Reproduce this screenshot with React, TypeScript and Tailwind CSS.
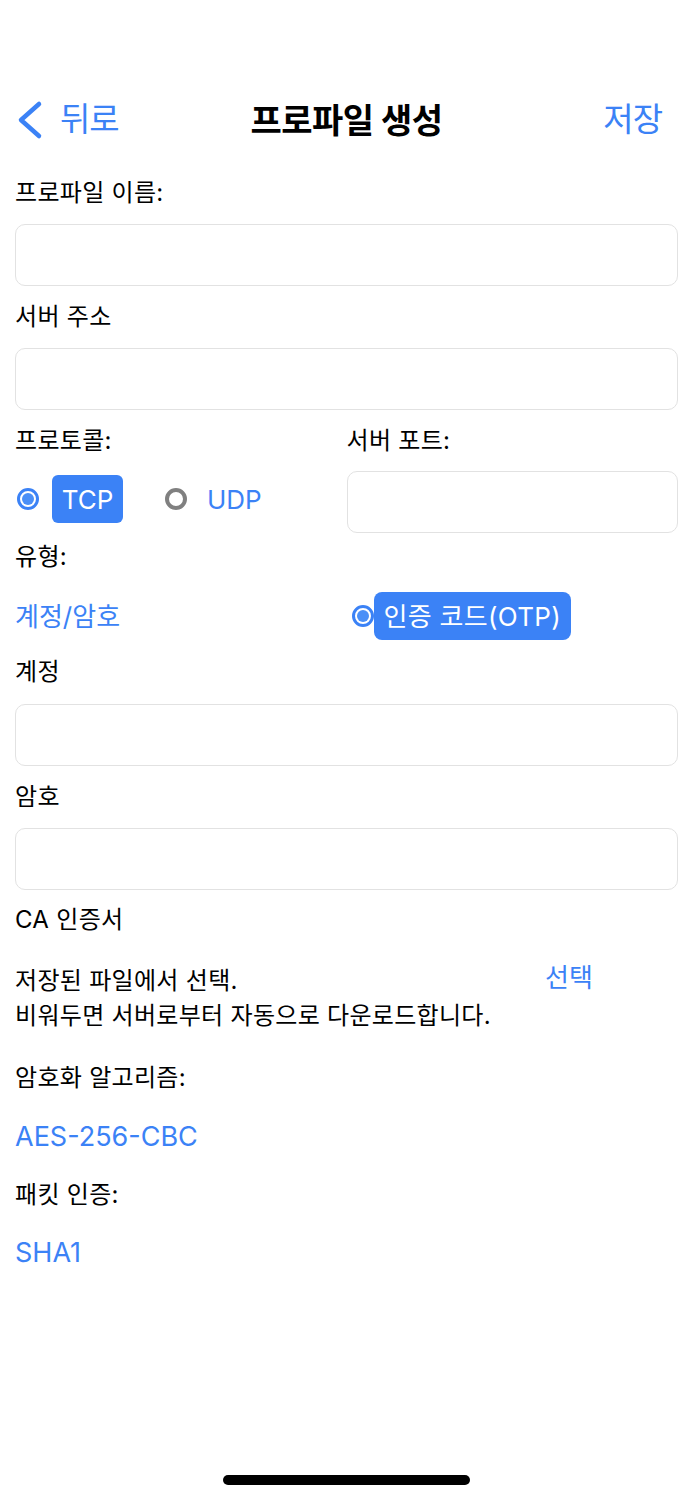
import React from "react";

const font = { fontFamily: 'Inter, "Noto Sans CJK KR", sans-serif' };

function Label({ children, className = "" }: { children: React.ReactNode; className?: string }) {
  return (
    <div className={`h-[32px] leading-[32px] text-[24px] tracking-[0.3px] text-black ${className}`}>
      {children}
    </div>
  );
}

function Field({ className = "" }: { className?: string }) {
  return (
    <div className={`h-[62px] rounded-[10px] border border-[#e2e2e2] bg-white ${className}`} />
  );
}

function Radio({ on }: { on: boolean }) {
  return on ? (
    <span className="flex h-[22px] w-[22px] shrink-0 items-center justify-center rounded-full border-[3px] border-[#3b82f6] bg-white">
      <span className="block h-[12px] w-[12px] rounded-full bg-[#4a8ff7]" />
    </span>
  ) : (
    <span className="block h-[22px] w-[22px] shrink-0 rounded-full border-[4px] border-[#808080] bg-white" />
  );
}

export default function App() {
  return (
    <div style={font} className="flex h-[1500px] flex-col bg-white px-[15px] pt-[95px]">
      {/* Nav bar */}
      <div className="relative flex h-[50px] items-center justify-between">
        <div className="flex items-center text-[33px] text-[#3b82f6]">
          <svg width="28" height="40" viewBox="0 0 28 40" className="ml-[1px]">
            <polyline
              points="23,4 5,20 23,36"
              fill="none"
              stroke="#3b82f6"
              strokeWidth="4.5"
              strokeLinecap="round"
              strokeLinejoin="round"
            />
          </svg>
          <span className="ml-[16px] tracking-[-1px]">뒤로</span>
        </div>
        <div className="absolute left-1/2 -translate-x-1/2 text-[34px] font-bold tracking-[-0.5px] text-black">
          프로파일 생성
        </div>
        <div className="mr-[16px] text-[33px] tracking-[-1px] text-[#3b82f6]">저장</div>
      </div>

      <Label className="mt-[32px]">프로파일 이름:</Label>
      <Field className="mt-[15px]" />

      <Label className="mt-[15px]">서버 주소</Label>
      <Field className="mt-[15px]" />

      {/* Protocol / port */}
      <div className="mt-[15px] grid grid-cols-2">
        <div>
          <Label>프로토콜:</Label>
          <div className="mt-[18px] flex h-[48px] items-center">
            <span className="ml-[2px]">
              <Radio on />
            </span>
            <span className="ml-[13px] flex h-[48px] w-[71px] items-center justify-center rounded-[6px] bg-[#3b82f6] text-[26px] text-white">
              TCP
            </span>
            <span className="ml-[42px]">
              <Radio on={false} />
            </span>
            <span className="ml-[20px] text-[26px] text-[#3b82f6]">UDP</span>
          </div>
        </div>
        <div>
          <Label>서버 포트:</Label>
          <Field className="mt-[14px]" />
        </div>
      </div>

      <Label className="mt-[8px]">유형:</Label>
      <div className="mt-[19px] grid h-[48px] grid-cols-2 items-center">
        <div className="text-[26px] text-[#3b82f6]">계정/암호</div>
        <div className="flex items-center">
          <span className="ml-[5px]">
            <Radio on />
          </span>
          <span className="flex h-[48px] items-center rounded-[8px] bg-[#3b82f6] px-[10px] text-[26px] tracking-[0.3px] text-white">
            인증 코드(OTP)
          </span>
        </div>
      </div>

      <Label className="mt-[16px]">계정</Label>
      <Field className="mt-[16px]" />

      <Label className="mt-[15px]">암호</Label>
      <Field className="mt-[15px]" />

      <Label className="mt-[14px]">CA 인증서</Label>
      <div className="mt-[27px] flex items-start">
        <div className="flex-1 text-[24px] leading-[35px] tracking-[0.3px] text-black">
          저장된 파일에서 선택.
          <br />
          비워두면 서버로부터 자동으로 다운로드합니다.
        </div>
        <div className="w-[133px] text-[26px] leading-[30px] text-[#3b82f6]">선택</div>
      </div>

      <Label className="mt-[29px]">암호화 알고리즘:</Label>
      <div className="mt-[27px] h-[32px] text-[27px] leading-[32px] text-[#3b82f6]">AES-256-CBC</div>

      <Label className="mt-[26px]">패킷 인증:</Label>
      <div className="mt-[26px] h-[32px] text-[27px] leading-[32px] text-[#3b82f6]">SHA1</div>

      {/* Home indicator */}
      <div className="mb-[15px] mt-auto flex justify-center">
        <div className="h-[10px] w-[247px] rounded-full bg-black" />
      </div>
    </div>
  );
}
